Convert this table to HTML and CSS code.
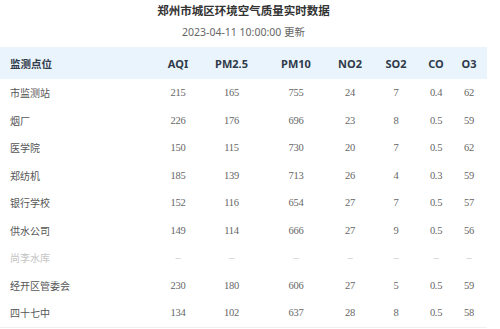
FILE: index.html
```html
<!DOCTYPE html>
<html lang="zh">
<head>
<meta charset="utf-8">
<link rel="stylesheet" href="styles.css">
</head>
<body>
<div class="page">
  <h1 class="title">郑州市城区环境空气质量实时数据</h1>
  <div class="sub">2023-04-11 10:00:00 更新</div>
  <div class="table">
    <div class="row head">
      <div class="name">监测点位</div><div>AQI</div><div>PM2.5</div><div>PM10</div><div>NO2</div><div>SO2</div><div>CO</div><div>O3</div>
    </div>
    <div class="row"><div class="name">市监测站</div><div>215</div><div>165</div><div>755</div><div>24</div><div>7</div><div>0.4</div><div>62</div></div>
    <div class="row"><div class="name">烟厂</div><div>226</div><div>176</div><div>696</div><div>23</div><div>8</div><div>0.5</div><div>59</div></div>
    <div class="row"><div class="name">医学院</div><div>150</div><div>115</div><div>730</div><div>20</div><div>7</div><div>0.5</div><div>62</div></div>
    <div class="row"><div class="name">郑纺机</div><div>185</div><div>139</div><div>713</div><div>26</div><div>4</div><div>0.3</div><div>59</div></div>
    <div class="row"><div class="name">银行学校</div><div>152</div><div>116</div><div>654</div><div>27</div><div>7</div><div>0.5</div><div>57</div></div>
    <div class="row"><div class="name">供水公司</div><div>149</div><div>114</div><div>666</div><div>27</div><div>9</div><div>0.5</div><div>56</div></div>
    <div class="row off"><div class="name">尚李水库</div><div>–</div><div>–</div><div>–</div><div>–</div><div>–</div><div>–</div><div>–</div></div>
    <div class="row"><div class="name">经开区管委会</div><div>230</div><div>180</div><div>606</div><div>27</div><div>5</div><div>0.5</div><div>59</div></div>
    <div class="row last"><div class="name">四十七中</div><div>134</div><div>102</div><div>637</div><div>28</div><div>8</div><div>0.5</div><div>58</div></div>
  </div>
</div>
</body>
</html>
```
FILE: styles.css
```css
html, body {
  margin: 0;
  padding: 0;
  background: #fff;
}
.page {
  width: 487px;
  font-family: "Noto Sans", "Noto Sans CJK SC", sans-serif;
}
.title {
  margin: 0;
  height: 22px;
  line-height: 22px;
  font-size: 11.5px;
  font-weight: bold;
  text-align: center;
  color: #333;
}
.sub {
  height: 20px;
  line-height: 20px;
  font-size: 10.5px;
  text-align: center;
  color: #666;
}
.table {
  margin-top: 5px;
}
.row {
  display: grid;
  grid-template-columns: 156px 44px 63px 66px 42px 50px 30px 36px;
  height: 27.5px;
  align-items: center;
  text-align: center;
  font-family: "Liberation Serif", serif;
  font-size: 10.5px;
  letter-spacing: -0.3px;
  color: #666;
}
.row .name {
  text-align: left;
  padding-left: 10px;
  font-family: "Noto Sans", "Noto Sans CJK SC", sans-serif;
  font-size: 10px;
  letter-spacing: 0;
  color: #555;
}
.row.head {
  height: 32px;
  background: #eaf4fd;
  font-family: "Noto Sans", "Noto Sans CJK SC", sans-serif;
  font-size: 11px;
  font-weight: bold;
  letter-spacing: 0;
  color: #2f3a4a;
}
.row.head .name {
  font-size: 10.5px;
  font-weight: bold;
  color: #2f3a4a;
}
.row.off,
.row.off .name {
  color: #c4c4c4;
}
.row.last {
  border-bottom: 1px solid #eef0f3;
}
```
